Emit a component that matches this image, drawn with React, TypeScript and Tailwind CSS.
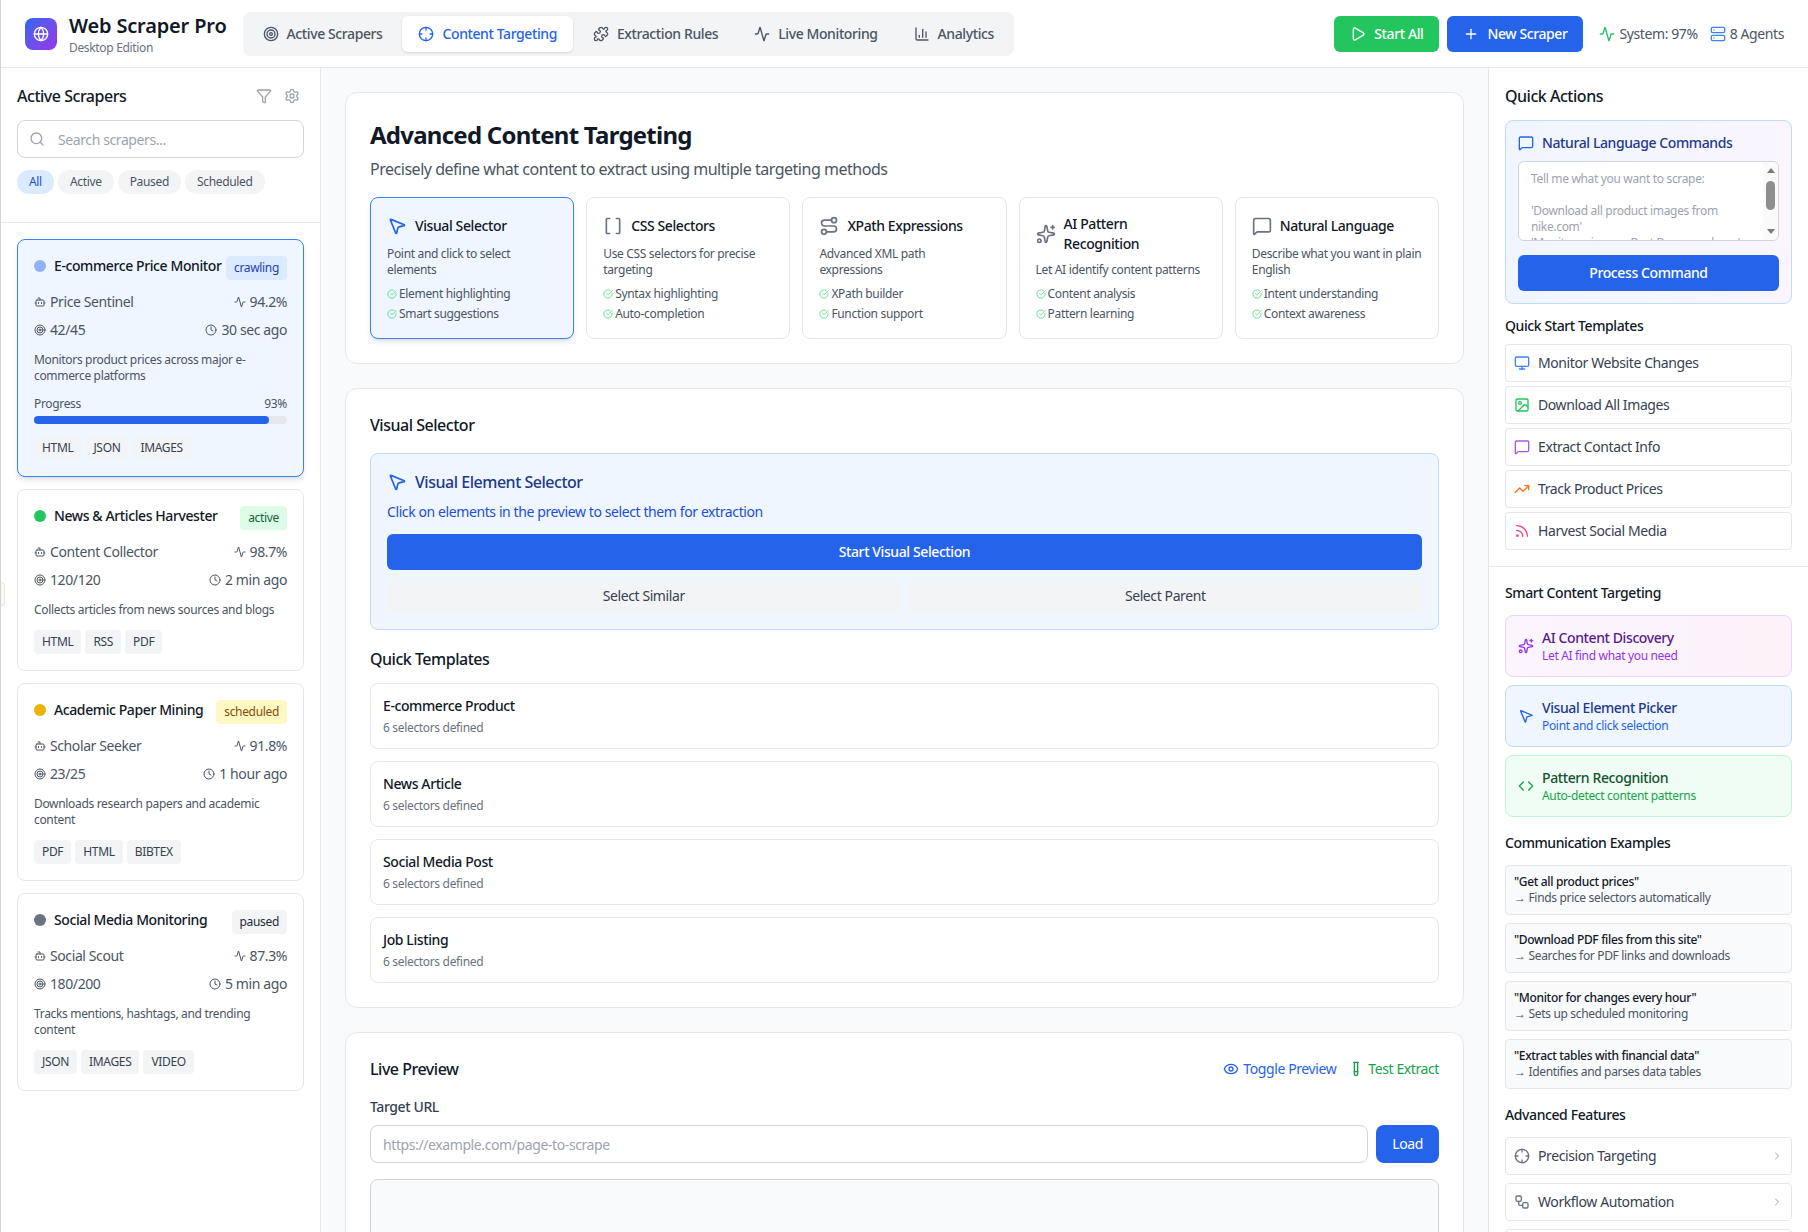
import clsx from 'clsx';
import {
  Activity,
  BarChart3,
  Bot,
  Brackets,
  ChevronRight,
  CircleCheckBig,
  Clock,
  Code,
  Crosshair,
  Eye,
  Filter,
  Globe,
  Image,
  MessageSquare,
  Monitor,
  MousePointer2,
  Play,
  Plus,
  Puzzle,
  Route,
  Rss,
  Search,
  Server,
  Settings,
  Sparkles,
  Target,
  TestTube,
  TrendingUp,
  Workflow,
} from 'lucide-react';

// -----------------------------------------------------------------------------
// Data
// -----------------------------------------------------------------------------

const tabs = [
  { label: 'Active Scrapers', Icon: Target },
  { label: 'Content Targeting', Icon: Crosshair, active: true },
  { label: 'Extraction Rules', Icon: Puzzle },
  { label: 'Live Monitoring', Icon: Activity },
  { label: 'Analytics', Icon: BarChart3 },
];

const scrapers = [
  {
    name: 'E-commerce Price Monitor',
    status: 'crawling',
    dot: 'bg-[#8fb3fa]',
    badge: 'bg-[#dbeafe] text-[#1e40af]',
    agent: 'Price Sentinel',
    rate: '94.2%',
    pages: '42/45',
    last: '30 sec ago',
    desc: 'Monitors product prices across major e-commerce platforms',
    progress: 93,
    tags: ['HTML', 'JSON', 'IMAGES'],
    selected: true,
  },
  {
    name: 'News & Articles Harvester',
    status: 'active',
    dot: 'bg-[#22c55e]',
    badge: 'bg-[#dcfce7] text-[#166534]',
    agent: 'Content Collector',
    rate: '98.7%',
    pages: '120/120',
    last: '2 min ago',
    desc: 'Collects articles from news sources and blogs',
    tags: ['HTML', 'RSS', 'PDF'],
  },
  {
    name: 'Academic Paper Mining',
    status: 'scheduled',
    dot: 'bg-[#eab308]',
    badge: 'bg-[#fef9c3] text-[#854d0e]',
    agent: 'Scholar Seeker',
    rate: '91.8%',
    pages: '23/25',
    last: '1 hour ago',
    desc: 'Downloads research papers and academic content',
    tags: ['PDF', 'HTML', 'BIBTEX'],
  },
  {
    name: 'Social Media Monitoring',
    status: 'paused',
    dot: 'bg-[#6b7280]',
    badge: 'bg-[#f3f4f6] text-[#1f2937]',
    agent: 'Social Scout',
    rate: '87.3%',
    pages: '180/200',
    last: '5 min ago',
    desc: 'Tracks mentions, hashtags, and trending content',
    tags: ['JSON', 'IMAGES', 'VIDEO'],
  },
];

const methods = [
  {
    title: 'Visual Selector',
    desc: 'Point and click to select elements',
    features: ['Element highlighting', 'Smart suggestions'],
    Icon: MousePointer2,
    selected: true,
  },
  {
    title: 'CSS Selectors',
    desc: 'Use CSS selectors for precise targeting',
    features: ['Syntax highlighting', 'Auto-completion'],
    Icon: Brackets,
  },
  {
    title: 'XPath Expressions',
    desc: 'Advanced XML path expressions',
    features: ['XPath builder', 'Function support'],
    Icon: Route,
  },
  {
    title: 'AI Pattern Recognition',
    desc: 'Let AI identify content patterns',
    features: ['Content analysis', 'Pattern learning'],
    Icon: Sparkles,
  },
  {
    title: 'Natural Language',
    desc: 'Describe what you want in plain English',
    features: ['Intent understanding', 'Context awareness'],
    Icon: MessageSquare,
  },
];

const templates = ['E-commerce Product', 'News Article', 'Social Media Post', 'Job Listing'];

const quickStart = [
  { label: 'Monitor Website Changes', Icon: Monitor, color: 'text-[#3b82f6]' },
  { label: 'Download All Images', Icon: Image, color: 'text-[#22c55e]' },
  { label: 'Extract Contact Info', Icon: MessageSquare, color: 'text-[#a855f7]' },
  { label: 'Track Product Prices', Icon: TrendingUp, color: 'text-[#f97316]' },
  { label: 'Harvest Social Media', Icon: Rss, color: 'text-[#ec4899]' },
];

const smart = [
  {
    title: 'AI Content Discovery',
    sub: 'Let AI find what you need',
    Icon: Sparkles,
    box: 'border-[#e9d5ff] bg-gradient-to-r from-[#faf5ff] to-[#fdf2f8]',
    icon: 'text-[#9333ea]',
    head: 'text-[#581c87]',
    text: 'text-[#9333ea]',
  },
  {
    title: 'Visual Element Picker',
    sub: 'Point and click selection',
    Icon: MousePointer2,
    box: 'border-[#bfdbfe] bg-[#eff6ff]',
    icon: 'text-[#2563eb]',
    head: 'text-[#1e3a8a]',
    text: 'text-[#2563eb]',
  },
  {
    title: 'Pattern Recognition',
    sub: 'Auto-detect content patterns',
    Icon: Code,
    box: 'border-[#bbf7d0] bg-[#f0fdf4]',
    icon: 'text-[#16a34a]',
    head: 'text-[#14532d]',
    text: 'text-[#16a34a]',
  },
];

const examples = [
  { q: '"Get all product prices"', a: 'Finds price selectors automatically' },
  { q: '"Download PDF files from this site"', a: 'Searches for PDF links and downloads' },
  { q: '"Monitor for changes every hour"', a: 'Sets up scheduled monitoring' },
  { q: '"Extract tables with financial data"', a: 'Identifies and parses data tables' },
];

const advanced = [
  { label: 'Precision Targeting', Icon: Crosshair },
  { label: 'Workflow Automation', Icon: Workflow },
];

const commandHint = `Tell me what you want to scrape:

'Download all product images from nike.com'
'Monitor prices on Best Buy every hour'
'Extract contact info from company pages'`;

// letter spacing per text size, to fit the reference's narrower face
const small = 'text-xs tracking-[-0.33px]';
const base = 'text-base tracking-[-0.48px]';

// -----------------------------------------------------------------------------
// Sections
// -----------------------------------------------------------------------------

const Header = () => (
  <header className="flex h-[68px] shrink-0 items-center justify-between border-b border-[#e5e7eb] bg-white px-6">
    <div className="flex items-center gap-4">
      <div className="flex items-center gap-3">
        <div className="flex size-8 items-center justify-center rounded-lg bg-gradient-to-br from-[#2563eb] to-[#9333ea]">
          <Globe className="size-4 text-white" />
        </div>
        <div>
          <div className="text-xl leading-7 font-semibold tracking-[-0.17px] text-[#111827]">Web Scraper Pro</div>
          <div className={clsx(small, 'text-[#6b7280]')}>Desktop Edition</div>
        </div>
      </div>
      <nav className="flex gap-1 rounded-lg bg-[#f3f4f6] p-1">
        {tabs.map(({ label, Icon, active }) => (
          <button
            key={label}
            className={clsx(
              'flex items-center gap-2 rounded-md px-4 py-2 text-sm font-medium',
              active ? 'bg-white text-[#2563eb] shadow-sm' : 'text-[#4b5563]',
            )}
          >
            <Icon className="size-4" />
            {label}
          </button>
        ))}
      </nav>
    </div>
    <div className="flex items-center gap-2">
      <button className="flex h-9 items-center gap-2 rounded-md bg-[#22c55e] px-4 text-sm font-medium text-white">
        <Play className="size-4" />
        Start All
      </button>
      <button className="flex h-9 items-center gap-2 rounded-md bg-[#2563eb] px-4 text-sm font-medium text-white">
        <Plus className="size-4" />
        New Scraper
      </button>
      <div className="ml-2 flex items-center gap-3 text-sm text-[#4b5563]">
        <span className="flex items-center gap-1">
          <Activity className="size-4 text-[#22c55e]" />
          System: 97%
        </span>
        <span className="flex items-center gap-1">
          <Server className="size-4 text-[#3b82f6]" />8 Agents
        </span>
      </div>
    </div>
  </header>
);

const ScraperCard = ({ s }: { s: (typeof scrapers)[number] }) => (
  <div
    className={clsx(
      'rounded-lg border p-4',
      s.selected ? 'border-[#3b82f6] bg-[#eff6ff] shadow-md' : 'border-[#e5e7eb] bg-white',
    )}
  >
    <div className="mb-3 flex items-start justify-between">
      <div className="flex items-center gap-2">
        <span className={clsx('size-3 rounded-full', s.dot)} />
        <span className="text-sm font-medium text-[#111827]">{s.name}</span>
      </div>
      <span className={clsx('rounded px-2 py-1', small, s.badge)}>{s.status}</span>
    </div>
    <div className="flex flex-col gap-2 text-sm text-[#4b5563]">
      <div className="flex items-center justify-between">
        <span className="flex items-center gap-1">
          <Bot className="size-3" />
          {s.agent}
        </span>
        <span className="flex items-center gap-1">
          <Activity className="size-3" />
          {s.rate}
        </span>
      </div>
      <div className="flex items-center justify-between">
        <span className="flex items-center gap-1">
          <Target className="size-3" />
          {s.pages}
        </span>
        <span className="flex items-center gap-1">
          <Clock className="size-3" />
          {s.last}
        </span>
      </div>
    </div>
    <p className={clsx('mt-3', small, 'text-[#4b5563]')}>{s.desc}</p>
    {s.progress ? (
      <div className="mt-3">
        <div className={clsx('mb-1 flex justify-between', small, 'text-[#4b5563]')}>
          <span>Progress</span>
          <span>{s.progress}%</span>
        </div>
        <div className="h-2 rounded-full bg-[#e5e7eb]">
          <div className="h-2 rounded-full bg-[#2563eb]" style={{ width: `${s.progress}%` }} />
        </div>
      </div>
    ) : null}
    <div className="mt-3 flex gap-1">
      {s.tags.map((t) => (
        <span key={t} className={clsx('rounded bg-[#f3f4f6] px-2 py-1', small, 'text-[#374151]')}>
          {t}
        </span>
      ))}
    </div>
  </div>
);

const LeftSidebar = () => (
  <aside className="flex w-[320px] shrink-0 flex-col overflow-hidden border-r border-[#e5e7eb] bg-white">
    <div className="border-b border-[#e5e7eb] p-4 pb-7">
      <div className="mb-3 flex h-6 items-center justify-between">
        <h2 className={clsx(base, 'font-medium text-[#111827]')}>Active Scrapers</h2>
        <div className="flex items-center gap-1 text-[#9ca3af]">
          <span className="p-1">
            <Filter className="size-4" />
          </span>
          <span className="p-1">
            <Settings className="size-4" />
          </span>
        </div>
      </div>
      <div className="relative">
        <Search className="absolute top-[11px] left-3 size-4 text-[#9ca3af]" />
        <input
          className="h-[38px] w-full rounded-lg border border-[#d1d5db] pr-3 pl-10 text-sm outline-none placeholder:text-[#9ca3af]"
          placeholder="Search scrapers..."
        />
      </div>
      <div className="mt-3 flex gap-1">
        {['All', 'Active', 'Paused', 'Scheduled'].map((f, i) => (
          <span
            key={f}
            className={clsx(
              'rounded-full px-3 py-1',
              small,
              i === 0 ? 'bg-[#dbeafe] text-[#1d4ed8]' : 'bg-[#f3f4f6] text-[#4b5563]',
            )}
          >
            {f}
          </span>
        ))}
      </div>
    </div>
    <div className="flex flex-col gap-3 p-4">
      {scrapers.map((s) => (
        <ScraperCard key={s.name} s={s} />
      ))}
    </div>
  </aside>
);

const MainContent = () => (
  <main className="flex min-w-0 flex-1 flex-col gap-6 overflow-hidden bg-[#f9fafb] p-6">
    <section className="shrink-0 rounded-xl border border-[#e5e7eb] bg-white p-6">
      <h1 className="mt-0.5 text-2xl font-bold tracking-[-0.75px] text-[#111827]">Advanced Content Targeting</h1>
      <p className={clsx('mt-1.5 mb-4', base, 'text-[#4b5563]')}>
        Precisely define what content to extract using multiple targeting methods
      </p>
      <div className="grid grid-cols-5 gap-3">
        {methods.map(({ title, desc, features, Icon, selected }) => (
          <div
            key={title}
            className={clsx(
              'h-[142px] rounded-lg border p-4',
              selected ? 'border-[#3b82f6] bg-[#eff6ff] shadow-md' : 'border-[#e5e7eb] bg-white',
            )}
          >
            <div className="mb-2 flex min-h-6 items-center gap-2">
              <Icon className={clsx('size-5 shrink-0', selected ? 'text-[#2563eb]' : 'text-[#6b7280]')} />
              <span className="text-sm font-medium text-[#111827]">{title}</span>
            </div>
            <p className={clsx(small, 'text-[#4b5563]')}>{desc}</p>
            <ul className="mt-2 flex flex-col gap-1">
              {features.map((f) => (
                <li key={f} className={clsx('flex items-center gap-0.5', small, 'text-[#4b5563]')}>
                  <CircleCheckBig className="size-2.5 text-[#4ade80]" />
                  {f}
                </li>
              ))}
            </ul>
          </div>
        ))}
      </div>
    </section>

    <section className="shrink-0 rounded-xl border border-[#e5e7eb] bg-white p-6">
      <h2 className={clsx('mb-4', base, 'font-medium text-[#111827]')}>Visual Selector</h2>
      <div className="rounded-lg border border-[#bfdbfe] bg-[#eff6ff] p-4">
        <div className="flex items-center gap-2">
          <MousePointer2 className="size-5 text-[#2563eb]" />
          <span className={clsx(base, 'font-medium text-[#1e3a8a]')}>Visual Element Selector</span>
        </div>
        <p className="mt-2 text-sm text-[#1d4ed8]">Click on elements in the preview to select them for extraction</p>
        <button className="mt-3 h-9 w-full rounded-md bg-[#2563eb] text-sm font-medium text-white">
          Start Visual Selection
        </button>
        <div className="mt-2 grid grid-cols-2 gap-2">
          <button className="h-[35px] rounded bg-[#f3f4f6] text-sm text-[#374151]">Select Similar</button>
          <button className="h-[35px] rounded bg-[#f3f4f6] text-sm text-[#374151]">Select Parent</button>
        </div>
      </div>
      <h3 className={clsx('mt-[17px] mb-3', base, 'font-medium text-[#111827]')}>Quick Templates</h3>
      <div className="flex flex-col gap-3">
        {templates.map((t) => (
          <div key={t} className="rounded-lg border border-[#e5e7eb] bg-white p-3">
            <div className="text-sm font-medium text-[#111827]">{t}</div>
            <div className={clsx('mt-1', small, 'text-[#6b7280]')}>6 selectors defined</div>
          </div>
        ))}
      </div>
    </section>

    <section className="shrink-0 rounded-xl border border-[#e5e7eb] bg-white p-6">
      <div className="mb-4 flex h-6 items-center justify-between">
        <h2 className={clsx(base, 'font-medium text-[#111827]')}>Live Preview</h2>
        <div className="flex items-center gap-3 text-sm">
          <span className="flex items-center gap-1 text-[#2563eb]">
            <Eye className="size-4" />
            Toggle Preview
          </span>
          <span className="flex items-center gap-1 text-[#16a34a]">
            <TestTube className="size-4" />
            Test Extract
          </span>
        </div>
      </div>
      <label className="mb-2 block text-sm font-medium text-[#374151]">Target URL</label>
      <div className="flex gap-2">
        <input
          className="h-[38px] min-w-0 flex-1 rounded-lg border border-[#d1d5db] px-3 text-sm outline-none placeholder:text-[#9ca3af]"
          placeholder="https://example.com/page-to-scrape"
        />
        <button className="h-[38px] rounded-lg bg-[#2563eb] px-4 text-sm text-white">Load</button>
      </div>
      <div className="mt-4 h-96 rounded-lg border border-[#d1d5db] bg-[#f9fafb]" />
    </section>
  </main>
);

const RightSidebar = () => (
  <aside className="flex w-[320px] shrink-0 flex-col overflow-hidden border-l border-[#e5e7eb] bg-white">
    <div className="border-b border-[#e5e7eb] p-4">
      <h2 className={clsx('mb-3', base, 'leading-6 font-medium text-[#111827]')}>Quick Actions</h2>
      <div className="rounded-lg border border-[#bfdbfe] bg-gradient-to-r from-[#eff6ff] to-[#faf5ff] p-3">
        <div className="mb-2 flex items-center gap-2 text-sm font-medium text-[#1e3a8a]">
          <MessageSquare className="size-4 text-[#2563eb]" />
          Natural Language Commands
        </div>
        <div className="relative">
          <textarea
            className={clsx(
              'block h-20 w-full resize-none overflow-hidden rounded-md border border-[#d1d5db] bg-white pt-[9px] pr-6 pl-3 text-[#9ca3af] outline-none',
              small,
            )}
            defaultValue={commandHint}
          />
          {/* classic scrollbar, headless chrome would not paint one here */}
          <div className="absolute top-px right-px bottom-px flex w-[15px] flex-col items-center justify-between rounded-r-md bg-[#fafafa] py-1.5">
            <span className="size-0 border-x-4 border-b-[5px] border-x-transparent border-b-[#7a7a7a]" />
            <span className="mt-2 mb-auto h-[29px] w-[9px] rounded-full bg-[#8e8e8e]" />
            <span className="size-0 border-x-4 border-t-[5px] border-x-transparent border-t-[#7a7a7a]" />
          </div>
        </div>
        <button className="mt-3.5 h-9 w-full rounded-md bg-[#2563eb] text-sm font-medium text-white">
          Process Command
        </button>
      </div>
      <h3 className="mt-3 mb-2 text-sm font-medium text-[#111827]">Quick Start Templates</h3>
      <div className="flex flex-col gap-1">
        {quickStart.map(({ label, Icon, color }) => (
          <div key={label} className="flex items-center gap-2 rounded border border-[#e5e7eb] p-2 text-sm text-[#374151]">
            <Icon className={clsx('size-4', color)} />
            {label}
          </div>
        ))}
      </div>
    </div>
    <div className="p-4">
      <h3 className="mb-3 text-sm font-medium text-[#111827]">Smart Content Targeting</h3>
      <div className="flex flex-col gap-2">
        {smart.map(({ title, sub, Icon, box, icon, head, text }) => (
          <div key={title} className={clsx('flex items-center gap-2 rounded-lg border p-3', box)}>
            <Icon className={clsx('size-4', icon)} />
            <div>
              <div className={clsx('text-sm font-medium', head)}>{title}</div>
              <div className={clsx(small, text)}>{sub}</div>
            </div>
          </div>
        ))}
      </div>
      <h3 className="mt-4 mb-3 text-sm font-medium text-[#111827]">Communication Examples</h3>
      <div className="flex flex-col gap-2">
        {examples.map(({ q, a }) => (
          <div key={q} className={clsx('rounded border border-[#e5e7eb] bg-[#f9fafb] p-2', small)}>
            <div className="font-medium text-[#111827]">{q}</div>
            <div className="text-[#4b5563]">
              <span className="[font-family:'Liberation_Sans',sans-serif]">→</span> {a}
            </div>
          </div>
        ))}
      </div>
      <h3 className="mt-4 mb-3 text-sm font-medium text-[#111827]">Advanced Features</h3>
      <div className="flex flex-col gap-2">
        {advanced.map(({ label, Icon }) => (
          <div key={label} className="flex items-center justify-between rounded border border-[#e5e7eb] p-2 text-sm text-[#374151]">
            <span className="flex items-center gap-2">
              <Icon className="size-4 text-[#6b7280]" />
              {label}
            </span>
            <ChevronRight className="size-3 text-[#9ca3af]" />
          </div>
        ))}
        <div className="h-9 rounded border border-[#e5e7eb]" />
      </div>
    </div>
  </aside>
);

// -----------------------------------------------------------------------------
// App
// -----------------------------------------------------------------------------

const App = () => (
  <div className="relative flex h-screen flex-col overflow-hidden border-l border-[#d4d4d0] bg-white tracking-[-0.4px] [font-family:'Noto_Sans',sans-serif]">
    <Header />
    <div className="flex min-h-0 flex-1">
      <LeftSidebar />
      <MainContent />
      <RightSidebar />
    </div>
    <div className="absolute top-[582px] left-0 h-6 w-1 rounded-r border border-l-0 border-[#e5e7eb] bg-[#fafaf5]" />
  </div>
);

export default App;
